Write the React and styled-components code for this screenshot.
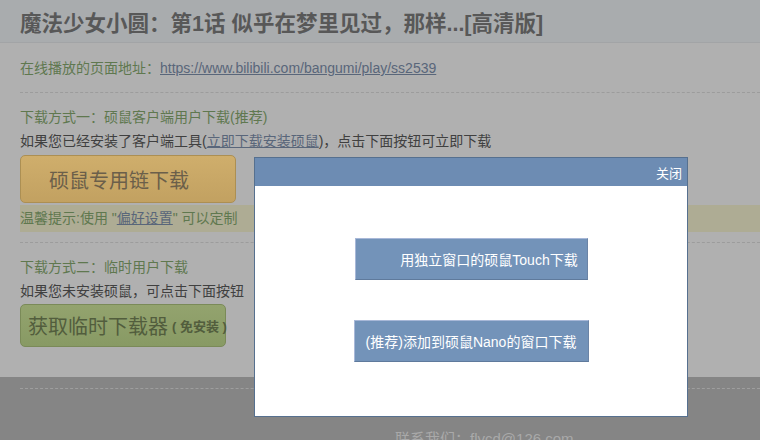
import React from 'react';
import styled, { createGlobalStyle } from 'styled-components';

const Global = createGlobalStyle`
  html, body {
    margin: 0;
    padding: 0;
    background: #b0b0b0;
    overflow: hidden;
    font-family: "Liberation Sans", "Noto Sans CJK SC", sans-serif;
  }
`;

const Page = styled.div`
  width: 760px;
  height: 440px;
  overflow: hidden;
  display: flex;
  flex-direction: column;
`;

const TitleBar = styled.div`
  height: 43px;
  flex-shrink: 0;
  padding-left: 20px;
  background: #a9acae;
  border-bottom: 1px solid #a2a4a6;
  display: flex;
  align-items: center;
  box-sizing: border-box;
`;

const Title = styled.h1`
  margin: 0;
  font-size: 21.5px;
  font-weight: 700;
  color: #585858;
  white-space: nowrap;
`;

const Content = styled.div`
  margin-left: 20px;
  padding-bottom: 30px;
  flex-shrink: 0;
  display: flex;
  flex-direction: column;
`;

const Block = styled.div`
  padding: ${p => p.$pad || '12px 0'};
  border-bottom: ${p => (p.$dashed ? '1px dashed #9c9c9c' : 'none')};
  display: flex;
  flex-direction: column;
  align-items: flex-start;
`;

const Line = styled.div`
  font-size: 14px;
  line-height: 24px;
  color: ${p => (p.$green ? '#5f784f' : '#404040')};
  white-space: nowrap;
`;

const Link = styled.a`
  color: #59667a;
  text-decoration: underline;
`;

const BigButton = styled.div`
  box-sizing: border-box;
  width: ${p => p.$w}px;
  height: ${p => p.$h}px;
  margin-top: ${p => p.$mt}px;
  padding-left: ${p => p.$pl}px;
  display: flex;
  align-items: center;
  border-radius: 5px;
  background: linear-gradient(${p => p.$top}, ${p => p.$bg});
  border: 1px solid ${p => p.$bd};
  color: ${p => p.$fg};
  font-size: 20px;
  white-space: nowrap;
`;

const Small = styled.span`
  font-size: 13px;
  font-weight: 700;
  margin-left: 4px;
`;

const Tip = styled.div`
  margin-top: 2px;
  height: 27px;
  width: 760px;
  background: #aeac94;
  font-size: 14px;
  line-height: 27px;
  color: #5f784f;
  white-space: nowrap;
`;

const Footer = styled.div`
  flex: 1;
  background: #858585;
  padding-top: 11px;
`;

const FooterRule = styled.div`
  margin-left: 20px;
  border-top: 1px dashed #9e9e9e;
`;

const FooterText = styled.div`
  margin-top: 41px;
  padding-left: 395px;
  font-size: 15px;
  line-height: 18px;
  color: #a9a9a9;
  white-space: nowrap;
`;

const Modal = styled.div`
  position: fixed;
  left: 254px;
  top: 157px;
  width: 434px;
  height: 260px;
  box-sizing: border-box;
  border: 1px solid #56708f;
  background: #fff;
  display: flex;
  flex-direction: column;
`;

const ModalHead = styled.div`
  height: 28px;
  background: #6d8cb3;
  display: flex;
  align-items: center;
  justify-content: flex-end;
  padding-right: 5px;
  color: #fff;
  font-size: 13px;
`;

const ModalBody = styled.div`
  flex: 1;
  display: flex;
  flex-direction: column;
  align-items: center;
  padding-top: 52px;
  gap: 40px;
`;

const ActionButton = styled.div`
  box-sizing: border-box;
  width: ${p => p.$w}px;
  height: 42px;
  background: #7393b9;
  border: 1px solid #a8b8d8;
  border-bottom-color: #5f7a9c;
  border-right-color: #6b84a6;
  color: #fff;
  font-size: 14px;
  display: flex;
  align-items: center;
  justify-content: center;
  padding-left: ${p => p.$pl || 0}px;
  white-space: nowrap;
`;

export default function App() {
  return (
    <>
      <Global />
      <Page>
        <TitleBar>
          <Title>魔法少女小圆：第1话 似乎在梦里见过，那样...[高清版]</Title>
        </TitleBar>
        <Content>
          <Block $dashed $pad="13px 0 12px">
            <Line $green>
              在线播放的页面地址：<Link>https://www.bilibili.com/bangumi/play/ss2539</Link>
            </Line>
          </Block>
          <Block $dashed $pad="12px 0 10px">
            <Line $green>下载方式一：硕鼠客户端用户下载(推荐)</Line>
            <Line>
              如果您已经安装了客户端工具(<Link>立即下载安装硕鼠</Link>)，点击下面按钮可立即下载
            </Line>
            <BigButton $w={216} $h={48} $mt={2} $pl={28} $top="#cfae6c" $bg="#c2a161" $bd="#ac8f53" $fg="#6b5f4a">
              硕鼠专用链下载
            </BigButton>
            <Tip>
              温馨提示:使用 "<Link>偏好设置</Link>" 可以定制
            </Tip>
          </Block>
          <Block $pad="12px 0 0">
            <Line $green>下载方式二：临时用户下载</Line>
            <Line>如果您未安装硕鼠，可点击下面按钮</Line>
            <BigButton $w={206} $h={43} $mt={1} $pl={7} $top="#93a36e" $bg="#889a64" $bd="#7a8a58" $fg="#525d3d">
              获取临时下载器<Small>( 免安装 )</Small>
            </BigButton>
          </Block>
        </Content>
        <Footer>
          <FooterRule />
          <FooterText>联系我们：flvcd@126.com</FooterText>
        </Footer>
      </Page>
      <Modal>
        <ModalHead>关闭</ModalHead>
        <ModalBody>
          <ActionButton $w={233} $pl={36}>用独立窗口的硕鼠Touch下载</ActionButton>
          <ActionButton $w={235}>(推荐)添加到硕鼠Nano的窗口下载</ActionButton>
        </ModalBody>
      </Modal>
    </>
  );
}
